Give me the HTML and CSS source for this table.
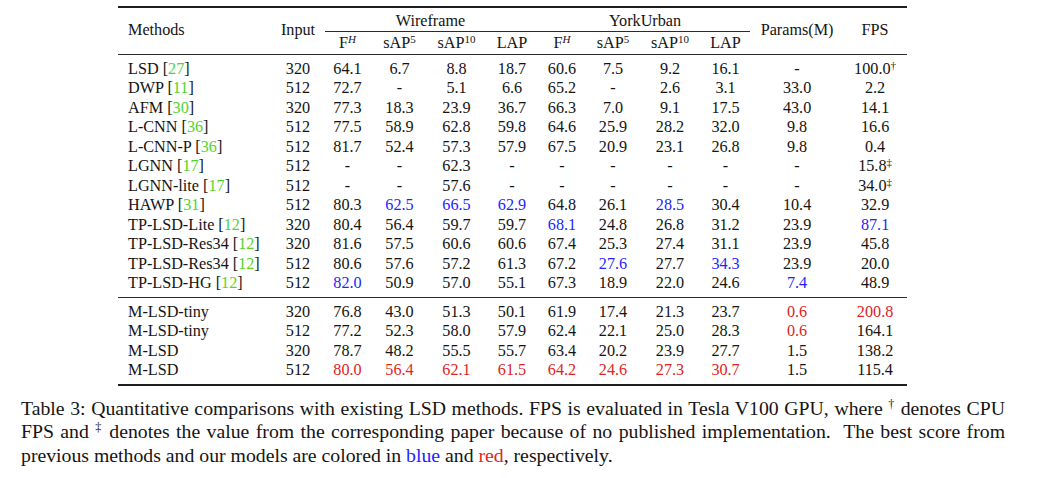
FILE: index.html
```html
<!DOCTYPE html>
<html lang="en">
<head>
<meta charset="utf-8">
<title>Table 3</title>
<link rel="stylesheet" href="styles.css">
</head>
<body>
<div class="page">
  <table class="results">
    <colgroup>
      <col class="c-method">
      <col class="c-input">
      <col class="c-f">
      <col class="c-s5">
      <col class="c-s10">
      <col class="c-lap">
      <col class="c-yf">
      <col class="c-ys5">
      <col class="c-ys10">
      <col class="c-ylap">
      <col class="c-params">
      <col class="c-fps">
    </colgroup>
    <thead>
      <tr class="hrow1">
        <th rowspan="2" class="method mid">Methods</th>
        <th rowspan="2" class="mid">Input</th>
        <th colspan="4" class="group group-left"><div class="cmid">Wireframe</div></th>
        <th colspan="4" class="group group-right"><div class="cmid">YorkUrban</div></th>
        <th rowspan="2" class="mid">Params(M)</th>
        <th rowspan="2" class="mid">FPS</th>
      </tr>
      <tr class="hrow2">
        <th class="mid">F<sup class="it">H</sup></th>
        <th class="mid">sAP<sup>5</sup></th>
        <th class="mid">sAP<sup>10</sup></th>
        <th class="mid">LAP</th>
        <th class="mid">F<sup class="it">H</sup></th>
        <th class="mid">sAP<sup>5</sup></th>
        <th class="mid">sAP<sup>10</sup></th>
        <th class="mid">LAP</th>
      </tr>
    </thead>
    <tbody>
      <tr class="first">
        <td class="method">LSD [<span class="cite">27</span>]</td><td>320</td>
        <td>64.1</td><td>6.7</td><td>8.8</td><td>18.7</td>
        <td>60.6</td><td>7.5</td><td>9.2</td><td>16.1</td>
        <td>-</td><td>100.0<sup>†</sup></td>
      </tr>
      <tr>
        <td class="method">DWP [<span class="cite">11</span>]</td><td>512</td>
        <td>72.7</td><td>-</td><td>5.1</td><td>6.6</td>
        <td>65.2</td><td>-</td><td>2.6</td><td>3.1</td>
        <td>33.0</td><td>2.2</td>
      </tr>
      <tr>
        <td class="method">AFM [<span class="cite">30</span>]</td><td>320</td>
        <td>77.3</td><td>18.3</td><td>23.9</td><td>36.7</td>
        <td>66.3</td><td>7.0</td><td>9.1</td><td>17.5</td>
        <td>43.0</td><td>14.1</td>
      </tr>
      <tr>
        <td class="method">L-CNN [<span class="cite">36</span>]</td><td>512</td>
        <td>77.5</td><td>58.9</td><td>62.8</td><td>59.8</td>
        <td>64.6</td><td>25.9</td><td>28.2</td><td>32.0</td>
        <td>9.8</td><td>16.6</td>
      </tr>
      <tr>
        <td class="method">L-CNN-P [<span class="cite">36</span>]</td><td>512</td>
        <td>81.7</td><td>52.4</td><td>57.3</td><td>57.9</td>
        <td>67.5</td><td>20.9</td><td>23.1</td><td>26.8</td>
        <td>9.8</td><td>0.4</td>
      </tr>
      <tr>
        <td class="method">LGNN [<span class="cite">17</span>]</td><td>512</td>
        <td>-</td><td>-</td><td>62.3</td><td>-</td>
        <td>-</td><td>-</td><td>-</td><td>-</td>
        <td>-</td><td>15.8<sup>‡</sup></td>
      </tr>
      <tr>
        <td class="method">LGNN-lite [<span class="cite">17</span>]</td><td>512</td>
        <td>-</td><td>-</td><td>57.6</td><td>-</td>
        <td>-</td><td>-</td><td>-</td><td>-</td>
        <td>-</td><td>34.0<sup>‡</sup></td>
      </tr>
      <tr>
        <td class="method">HAWP [<span class="cite">31</span>]</td><td>512</td>
        <td>80.3</td><td class="best-prev">62.5</td><td class="best-prev">66.5</td><td class="best-prev">62.9</td>
        <td>64.8</td><td>26.1</td><td class="best-prev">28.5</td><td>30.4</td>
        <td>10.4</td><td>32.9</td>
      </tr>
      <tr>
        <td class="method">TP-LSD-Lite [<span class="cite">12</span>]</td><td>320</td>
        <td>80.4</td><td>56.4</td><td>59.7</td><td>59.7</td>
        <td class="best-prev">68.1</td><td>24.8</td><td>26.8</td><td>31.2</td>
        <td>23.9</td><td class="best-prev">87.1</td>
      </tr>
      <tr>
        <td class="method">TP-LSD-Res34 [<span class="cite">12</span>]</td><td>320</td>
        <td>81.6</td><td>57.5</td><td>60.6</td><td>60.6</td>
        <td>67.4</td><td>25.3</td><td>27.4</td><td>31.1</td>
        <td>23.9</td><td>45.8</td>
      </tr>
      <tr>
        <td class="method">TP-LSD-Res34 [<span class="cite">12</span>]</td><td>512</td>
        <td>80.6</td><td>57.6</td><td>57.2</td><td>61.3</td>
        <td>67.2</td><td class="best-prev">27.6</td><td>27.7</td><td class="best-prev">34.3</td>
        <td>23.9</td><td>20.0</td>
      </tr>
      <tr class="last">
        <td class="method">TP-LSD-HG [<span class="cite">12</span>]</td><td>512</td>
        <td class="best-prev">82.0</td><td>50.9</td><td>57.0</td><td>55.1</td>
        <td>67.3</td><td>18.9</td><td>22.0</td><td>24.6</td>
        <td class="best-prev">7.4</td><td>48.9</td>
      </tr>
    </tbody>
    <tbody class="ours">
      <tr class="first">
        <td class="method">M-LSD-tiny</td><td>320</td>
        <td>76.8</td><td>43.0</td><td>51.3</td><td>50.1</td>
        <td>61.9</td><td>17.4</td><td>21.3</td><td>23.7</td>
        <td class="best-ours">0.6</td><td class="best-ours">200.8</td>
      </tr>
      <tr>
        <td class="method">M-LSD-tiny</td><td>512</td>
        <td>77.2</td><td>52.3</td><td>58.0</td><td>57.9</td>
        <td>62.4</td><td>22.1</td><td>25.0</td><td>28.3</td>
        <td class="best-ours">0.6</td><td>164.1</td>
      </tr>
      <tr>
        <td class="method">M-LSD</td><td>320</td>
        <td>78.7</td><td>48.2</td><td>55.5</td><td>55.7</td>
        <td>63.4</td><td>20.2</td><td>23.9</td><td>27.7</td>
        <td>1.5</td><td>138.2</td>
      </tr>
      <tr class="last">
        <td class="method">M-LSD</td><td>512</td>
        <td class="best-ours">80.0</td><td class="best-ours">56.4</td><td class="best-ours">62.1</td><td class="best-ours">61.5</td>
        <td class="best-ours">64.2</td><td class="best-ours">24.6</td><td class="best-ours">27.3</td><td class="best-ours">30.7</td>
        <td>1.5</td><td>115.4</td>
      </tr>
    </tbody>
  </table>

  <p class="caption">
    <span class="line justified">Table 3: Quantitative comparisons with existing LSD methods. FPS is evaluated in Tesla V100 GPU, where <sup>†</sup> denotes CPU</span>
    <span class="line justified">FPS and <sup>‡</sup> denotes the value from the corresponding paper because of no published implementation.&nbsp; The best score from</span>
    <span class="line">previous methods and our models are colored in <span class="blue">blue</span> and <span class="red">red</span>, respectively.</span>
  </p>
</div>
</body>
</html>
```

FILE: styles.css
```css
html, body {
  margin: 0;
  padding: 0;
  background: #ffffff;
}

body {
  font-family: "Liberation Serif", "Times New Roman", serif;
  color: #141414;
}

.page {
  padding-top: 6px;
}

/* ---------- table ---------- */
.results {
  margin-left: 118px;
  width: 789px;
  table-layout: fixed;
  border-collapse: separate;
  border-spacing: 0;
  border-top: 2px solid #1e1e1e;
  border-bottom: 2px solid #1e1e1e;
  font-size: 16.2px;
}

.c-method { width: 155px; }
.c-input  { width: 50px; }
.c-f      { width: 49px; }
.c-s5     { width: 55px; }
.c-s10    { width: 59px; }
.c-lap    { width: 52px; }
.c-yf     { width: 48px; }
.c-ys5    { width: 54px; }
.c-ys10   { width: 60px; }
.c-ylap   { width: 51px; }
.c-params { width: 92px; }
.c-fps    { width: 64px; }

.results th,
.results td {
  padding: 0;
  text-align: center;
  white-space: nowrap;
  font-weight: normal;
  line-height: 19.5px;
}

.results .method {
  text-align: left;
  padding-left: 10px;
}

.results thead th {
  vertical-align: middle;
}

.hrow1 th.group {
  height: 24px;
  vertical-align: bottom;
}

.hrow1 th.group-left {
  padding: 0 0 0 2px;
}

.hrow1 th.group-right {
  padding: 0 1px 0 0;
}

.group-left .cmid {
  padding-right: 2px;
}

.group-right .cmid {
  padding-left: 2px;
}

.cmid {
  border-bottom: 1px solid #2a2a2a;
  height: 23px;
  line-height: 26px;
}

.hrow2 th {
  height: 22px;
  line-height: 20px;
}

.results th.mid {
  border-bottom: 1px solid #2a2a2a;
}

.results tbody .first td {
  padding-top: 4.5px;
}

.results tbody .last td {
  padding-bottom: 3px;
}

.results tbody.ours tr.first td {
  border-top: 1px solid #2a2a2a;
  padding-top: 5px;
}

.results tbody.ours tr.last td {
  padding-bottom: 3.5px;
}

.results sup {
  font-size: 0.68em;
  line-height: 0;
  vertical-align: 0.5em;
}

.results sup.it {
  font-style: italic;
}

.cite {
  color: #52d42c;
}

.best-prev {
  color: #1f1fff;
}

.best-ours {
  color: #e02424;
}

/* ---------- caption ---------- */
.caption {
  margin: 10.6px 0 0 21px;
  width: 984px;
  font-size: 19.75px;
  line-height: 23.5px;
}

.caption .line {
  display: block;
}

.caption .justified {
  text-align: justify;
  text-align-last: justify;
}

.caption sup {
  font-size: 0.62em;
  line-height: 0;
  vertical-align: 0.55em;
}

.blue {
  color: #1f1fff;
}

.red {
  color: #e02424;
}
```
